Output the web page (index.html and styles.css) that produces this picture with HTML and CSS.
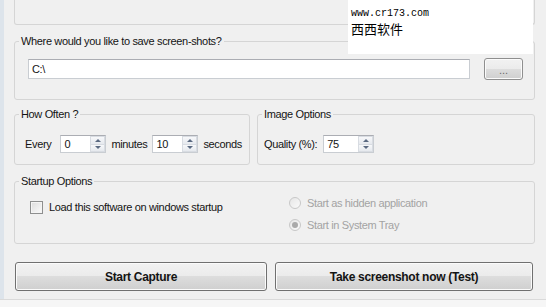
FILE: index.html
```html
<!DOCTYPE html>
<html lang="en">
<head>
    <meta charset="UTF-8">
    <meta name="viewport" content="width=device-width, initial-scale=1.0">
    <title>Screen Capture Settings</title>
    <link rel="stylesheet" href="styles.css">
</head>
<body>
    <div class="window">
        <div class="group group-top"></div>

        <fieldset class="group save-group">
            <legend>Where would you like to save screen-shots?</legend>
            <div class="group-body save-body">
                <div class="path-row">
                    <div class="path-input">C:\</div>
                    <button class="btn browse-btn">...</button>
                </div>
            </div>
        </fieldset>

        <div class="options-row">
            <fieldset class="group">
                <legend>How Often ?</legend>
                <div class="group-body often-body">
                    <div class="field-row">
                        <span class="label-every">Every</span>
                        <span class="spin">
                            <span class="spin-value">0</span>
                            <span class="spin-arrows"><i class="arrow-up"></i><i class="arrow-down"></i></span>
                        </span>
                        <span>minutes</span>
                        <span class="spin">
                            <span class="spin-value">10</span>
                            <span class="spin-arrows"><i class="arrow-up"></i><i class="arrow-down"></i></span>
                        </span>
                        <span>seconds</span>
                    </div>
                </div>
            </fieldset>

            <fieldset class="group">
                <legend>Image Options</legend>
                <div class="group-body image-body">
                    <div class="field-row">
                        <span class="label-quality">Quality (%):</span>
                        <span class="spin spin-wide">
                            <span class="spin-value">75</span>
                            <span class="spin-arrows"><i class="arrow-up"></i><i class="arrow-down"></i></span>
                        </span>
                    </div>
                </div>
            </fieldset>
        </div>

        <fieldset class="group startup-group">
            <legend>Startup Options</legend>
            <div class="group-body startup-body">
                <div class="check-col">
                    <label class="check-row"><span class="checkbox"></span>Load this software on windows startup</label>
                </div>
                <div class="radio-col">
                    <div class="radio-row disabled"><span class="radio"></span>Start as hidden application</div>
                    <div class="radio-row disabled"><span class="radio checked"></span>Start in System Tray</div>
                </div>
            </div>
        </fieldset>

        <div class="actions">
            <button class="btn action-btn">Start Capture</button>
            <button class="btn action-btn">Take screenshot now (Test)</button>
        </div>

        <div class="bottom-edge"></div>
    </div>

    <div class="watermark">
        <div class="wm-url">www.cr173.com</div>
        <div class="wm-name">西西软件</div>
    </div>
</body>
</html>
```

FILE: styles.css
```css
body {
    margin: 0;
    background-color: #f0f0f0;
    font-family: 'Liberation Sans', Arial, sans-serif;
    font-size: 11px;
    letter-spacing: -0.35px;
    color: #141414;
    overflow: hidden;
}

.window {
    border-left: 4px solid #dde4eb;
    padding: 0 11px 0 10px;
    height: 307px;
    box-sizing: border-box;
}

.group {
    border: 1px solid #d5d5d5;
    border-radius: 3px;
    margin: 0;
    padding: 0;
    min-width: 0;
}

.group legend {
    padding: 0 2px;
    margin-left: 4px;
    line-height: 14px;
}

.group-top {
    height: 24px;
    border-top: none;
    border-radius: 0 0 3px 3px;
}

.save-group,
.startup-group {
    margin-top: 9px;
}

/* save location */
.save-body {
    padding: 10px 11px 19px 13px;
}

.path-row {
    display: flex;
    align-items: center;
    gap: 14px;
}

.path-input {
    flex: 1;
    height: 18px;
    line-height: 18px;
    padding-left: 3px;
    background-color: #fff;
    border: 1px solid #c9cdd2;
    border-top-color: #abadb3;
}

.btn {
    font-family: 'Liberation Sans', Arial, sans-serif;
    border: 1px solid #707070;
    border-radius: 3px;
    background: linear-gradient(#f2f2f2 0%, #ebebeb 50%, #dddddd 50%, #cfcfcf 100%);
    box-shadow: inset 0 0 0 1px #fbfbfb;
    color: #141414;
    padding: 0;
    cursor: pointer;
}

.browse-btn {
    width: 39px;
    height: 22px;
    color: #6a6a6a;
    font-size: 11px;
    line-height: 22px;
    border-color: #8f8f8f;
}

/* how often / image */
.options-row {
    display: grid;
    grid-template-columns: 236px 1fr;
    gap: 7px;
    margin-top: 7px;
}

.often-body {
    padding: 14px 0 11px 10px;
}

.image-body {
    padding: 14px 0 11px 6px;
}

.field-row {
    display: flex;
    align-items: center;
    height: 18px;
    gap: 5px;
}

.label-every {
    margin-right: 4px;
}

.label-quality {
    margin-right: 1px;
}

.spin {
    position: relative;
    display: inline-block;
    width: 44px;
    height: 16px;
    background-color: #fff;
    border: 1px solid #c9cdd2;
    border-top-color: #abadb3;
}

.spin-wide {
    width: 49px;
}

.spin-value {
    display: block;
    padding-left: 3px;
    line-height: 16px;
}

.spin-arrows {
    position: absolute;
    top: 0;
    right: 0;
    width: 15px;
    height: 16px;
    display: flex;
    flex-direction: column;
}

.spin-arrows i {
    flex: 1;
    position: relative;
    border: 1px solid #d8dce2;
    background: linear-gradient(#f7f8fa, #e6e9ee);
}

.spin-arrows i + i {
    border-top: none;
}

.spin-arrows i::after {
    content: '';
    position: absolute;
    left: 4px;
    top: 2px;
    border-left: 3px solid transparent;
    border-right: 3px solid transparent;
}

.arrow-up::after {
    border-bottom: 3px solid #5b6a82;
}

.arrow-down::after {
    border-top: 3px solid #5b6a82;
    top: 1px !important;
}

/* startup */
.startup-body {
    display: grid;
    grid-template-columns: 259px 1fr;
    padding: 6px 0 9px 15px;
}

.check-row {
    display: flex;
    align-items: center;
    gap: 6px;
    height: 18px;
    margin-top: 4px;
}

.checkbox {
    width: 11px;
    height: 11px;
    border: 1px solid #8e8f8f;
    background: linear-gradient(135deg, #dcdcdc, #fbfbfb);
    box-shadow: inset 0 0 0 1px #f4f4f4;
}

.radio-col {
    display: flex;
    flex-direction: column;
    gap: 4px;
}

.radio-row {
    display: flex;
    align-items: center;
    gap: 6px;
    height: 18px;
}

.radio-row.disabled {
    color: #a3a3a3;
}

.radio {
    position: relative;
    width: 10px;
    height: 10px;
    border: 1px solid #c8c8c8;
    border-radius: 50%;
    background: linear-gradient(135deg, #e6e6e6, #fafafa);
}

.radio.checked::after {
    content: '';
    position: absolute;
    left: 2px;
    top: 2px;
    width: 6px;
    height: 6px;
    border-radius: 50%;
    background-color: #a9a9a9;
}

/* buttons */
.actions {
    display: grid;
    grid-template-columns: 252px 258px;
    gap: 8px;
    margin-top: 18px;
    padding-left: 1px;
}

.action-btn {
    height: 29px;
    font-size: 12px;
    font-weight: bold;
    letter-spacing: -0.3px;
}

.bottom-edge {
    margin: 8px -11px 0 -14px;
    border-top: 1px solid #dadada;
    height: 7px;
    background-color: #f6f6f6;
}

/* watermark overlay */
.watermark {
    position: absolute;
    top: 0;
    left: 348px;
    width: 182px;
    height: 47px;
    padding: 7px 0 0 3px;
    background-color: #fff;
    color: #000;
    letter-spacing: 0;
}

.wm-url {
    font-family: 'Liberation Mono', monospace;
    font-size: 10px;
    line-height: 13px;
}

.wm-name {
    font-family: 'Noto Sans CJK SC', sans-serif;
    font-size: 13px;
    line-height: 18px;
}
```
